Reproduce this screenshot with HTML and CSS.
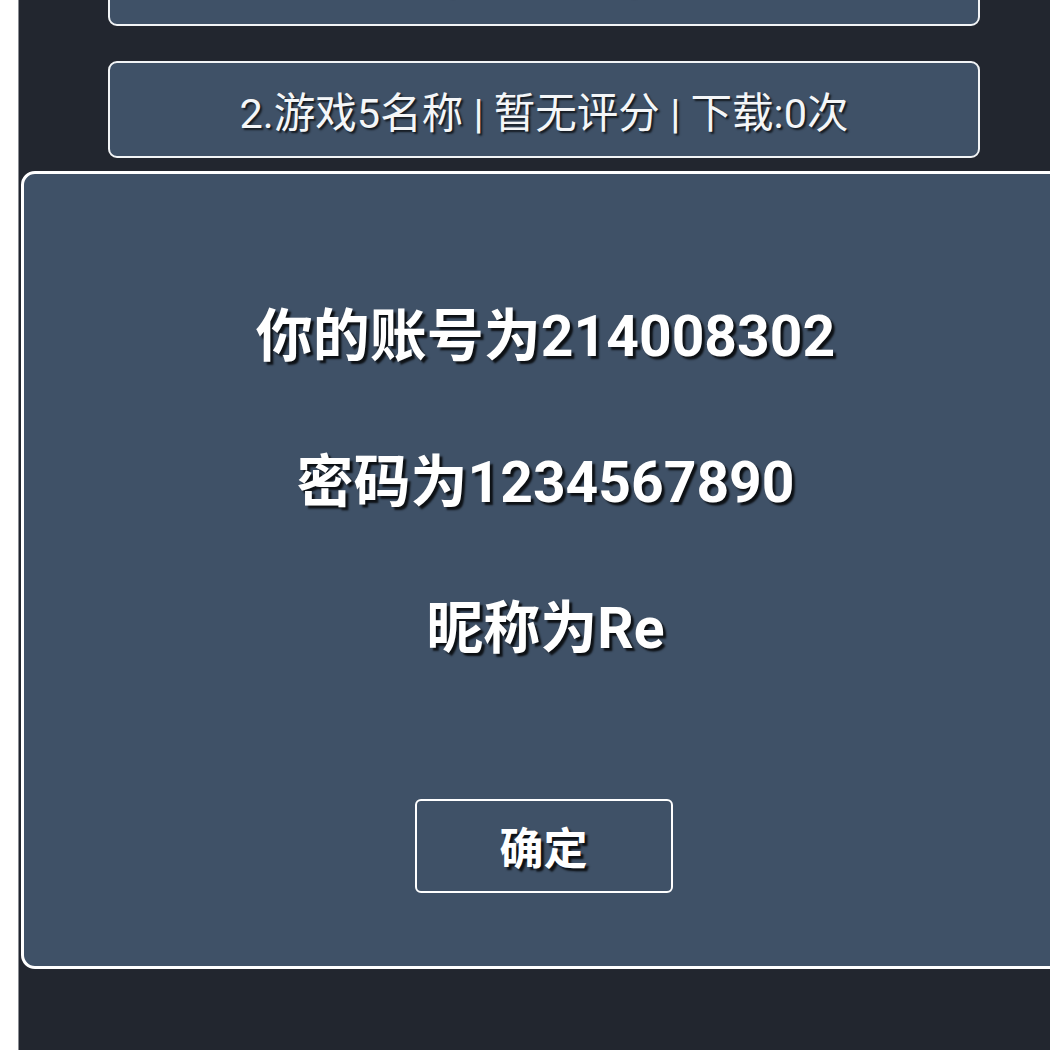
FILE: index.html
```html
<!DOCTYPE html>
<html lang="zh-CN">
<head>
<meta charset="utf-8">
<title>账号信息</title>
<link rel="stylesheet" href="styles.css">
</head>
<body>
<div class="screen">
  <div class="list">
    <div class="card card-top"><span class="card-text">1.游戏6名称 | 评分:9.5 | 下载:1000次</span></div>
    <div class="card"><span class="card-text">2.游戏5名称 | 暂无评分 | 下载:0次</span></div>
  </div>
  <div class="dialog">
    <p class="info">你的账号为214008302</p>
    <p class="info">密码为1234567890</p>
    <p class="info">昵称为Re</p>
    <button class="confirm" type="button">确定</button>
  </div>
</div>
</body>
</html>
```

FILE: styles.css
```css
html, body {
  margin: 0;
  padding: 0;
  background: #ffffff;
  overflow: hidden;
}

.screen {
  margin-left: 18px;
  height: 1050px;
  background: #22262f;
  border-left: 1px solid #8a8d93;
  box-sizing: border-box;
  overflow: hidden;
  font-family: "Roboto", "Noto Sans CJK SC", sans-serif;
}

.list {
  display: flex;
  flex-direction: column;
  gap: 35px;
  padding-left: 89px;
  width: 872px;
}

.card {
  height: 97px;
  box-sizing: border-box;
  border: 2px solid #f2f4f6;
  border-radius: 9px;
  background: #3f5167;
  display: flex;
  align-items: center;
  justify-content: center;
}

.card-top {
  margin-top: -71px;
  padding-bottom: 9px;
}

.card-text {
  color: #f4f6f8;
  font-size: 41.5px;
  white-space: pre;
  text-shadow: 2px 2px 2px rgba(0, 0, 0, 0.7);
}

.dialog {
  margin-top: 13px;
  margin-left: 2px;
  width: 1049px;
  height: 798px;
  box-sizing: border-box;
  border: 3px solid #ffffff;
  border-radius: 14px;
  background: #3f5167;
  display: flex;
  flex-direction: column;
  align-items: center;
  padding-top: 123px;
}

.info {
  margin: 0 0 66px;
  height: 80px;
  line-height: 80px;
  color: #ffffff;
  font-size: 57px;
  font-weight: 700;
  text-shadow: 3px 3px 2px rgba(0, 0, 0, 0.8);
}

.info:last-of-type {
  margin-bottom: 130px;
}

.confirm {
  width: 258px;
  height: 94px;
  margin-right: 4px;
  border: 2px solid #ffffff;
  border-radius: 6px;
  background: transparent;
  color: #ffffff;
  font-family: "Roboto", "Noto Sans CJK SC", sans-serif;
  font-size: 44px;
  font-weight: 700;
  text-shadow: 3px 3px 2px rgba(0, 0, 0, 0.8);
  padding: 0;
}
```
